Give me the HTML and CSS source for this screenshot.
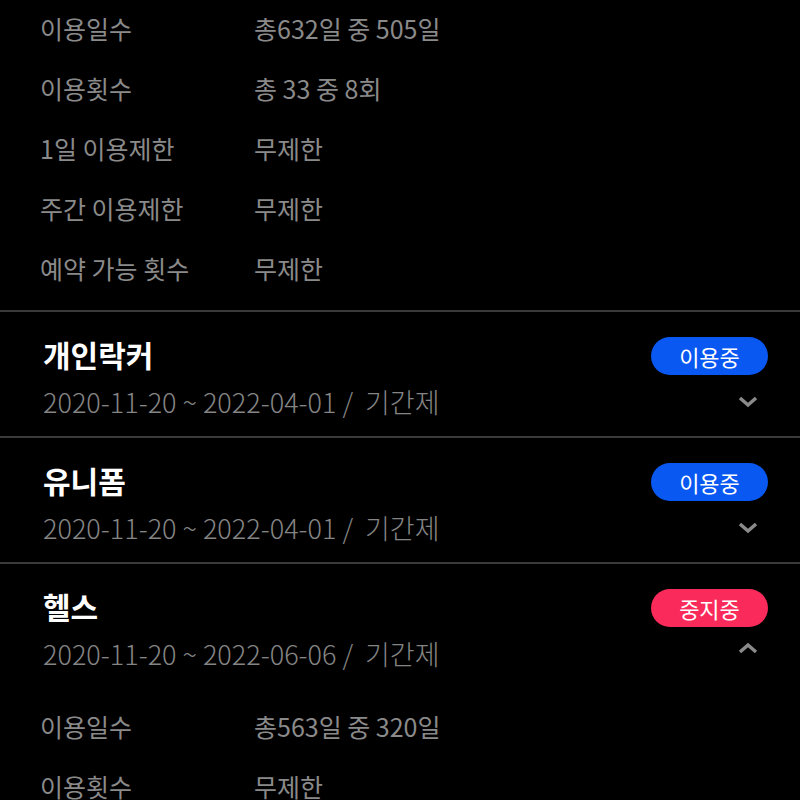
FILE: index.html
```html
<!doctype html>
<html>
<head>
  <meta charset="utf-8">
  <title>이용권</title>
  <link rel="stylesheet" href="styles.css">
</head>
<body>
  <div id="content">
    <ul class="details first">
      <li><span class="label">이용일수</span><span class="value">총632일 중 505일</span></li>
      <li><span class="label">이용횟수</span><span class="value">총 33 중 8회</span></li>
      <li><span class="label">1일 이용제한</span><span class="value">무제한</span></li>
      <li><span class="label">주간 이용제한</span><span class="value">무제한</span></li>
      <li><span class="label">예약 가능 횟수</span><span class="value">무제한</span></li>
    </ul>

    <div class="ticket">
      <div class="head">
        <span class="title">개인락커</span>
        <span class="badge active">이용중</span>
      </div>
      <div class="sub">
        <span class="period">2020-11-20 ~ 2022-04-01 /&nbsp; 기간제</span>
        <svg class="chevron" width="24" height="24" viewBox="0 0 24 24"><path d="M4 11 L12 18 L20 11" /></svg>
      </div>
    </div>

    <div class="ticket">
      <div class="head">
        <span class="title">유니폼</span>
        <span class="badge active">이용중</span>
      </div>
      <div class="sub">
        <span class="period">2020-11-20 ~ 2022-04-01 /&nbsp; 기간제</span>
        <svg class="chevron" width="24" height="24" viewBox="0 0 24 24"><path d="M4 11 L12 18 L20 11" /></svg>
      </div>
    </div>

    <div class="ticket open">
      <div class="head">
        <span class="title">헬스</span>
        <span class="badge paused">중지중</span>
      </div>
      <div class="sub">
        <span class="period">2020-11-20 ~ 2022-06-06 /&nbsp; 기간제</span>
        <svg class="chevron up" width="24" height="24" viewBox="0 0 24 24"><path d="M4 11 L12 18 L20 11" /></svg>
      </div>
      <ul class="details">
        <li><span class="label">이용일수</span><span class="value">총563일 중 320일</span></li>
        <li><span class="label">이용횟수</span><span class="value">무제한</span></li>
      </ul>
    </div>
  </div>
</body>
</html>
```

FILE: styles.css
```css
html {
  background-color: #000;
  color: #fff;
  font-family: "Noto Sans CJK KR", "Noto Sans", sans-serif;
}

body {
  margin: 0;
  height: 800px;
  overflow: hidden;
}

#content {
  width: 800px;
}

.details {
  list-style: none;
  margin: 0;
  padding: 0 0 12px 40px;
}
.details.first {
  margin-top: -2px;
}
.details li {
  display: flex;
  height: 60px;
  align-items: center;
  font-size: 25px;
  color: #8a8a8a;
}
.details .label {
  width: 214px;
}

.ticket {
  border-top: 2px solid #3a3a3a;
  padding: 22px 32px 17px 43px;
}
.ticket.open {
  padding-bottom: 0;
}

.head {
  display: flex;
  justify-content: space-between;
  align-items: center;
  height: 40px;
}
.title {
  font-size: 30px;
  font-weight: bold;
}
.badge {
  width: 117px;
  height: 38px;
  border-radius: 19px;
  font-size: 22px;
  line-height: 38px;
  text-align: center;
  margin-top: 4px;
}
.badge.active {
  background-color: #0a58f2;
}
.badge.paused {
  background-color: #fa2b5b;
}

.sub {
  display: flex;
  justify-content: space-between;
  align-items: center;
  height: 36px;
  margin-top: 9px;
}
.period {
  font-size: 27px;
  font-weight: 300;
  color: #858585;
}
.chevron {
  margin-right: 8px;
  margin-top: -4px;
}
.chevron path {
  fill: none;
  stroke: #8a8a8a;
  stroke-width: 3.5;
}
.chevron.up {
  transform: rotate(180deg);
}

.open .details {
  margin-left: -3px;
  padding-top: 25px;
  padding-left: 0;
}
```
